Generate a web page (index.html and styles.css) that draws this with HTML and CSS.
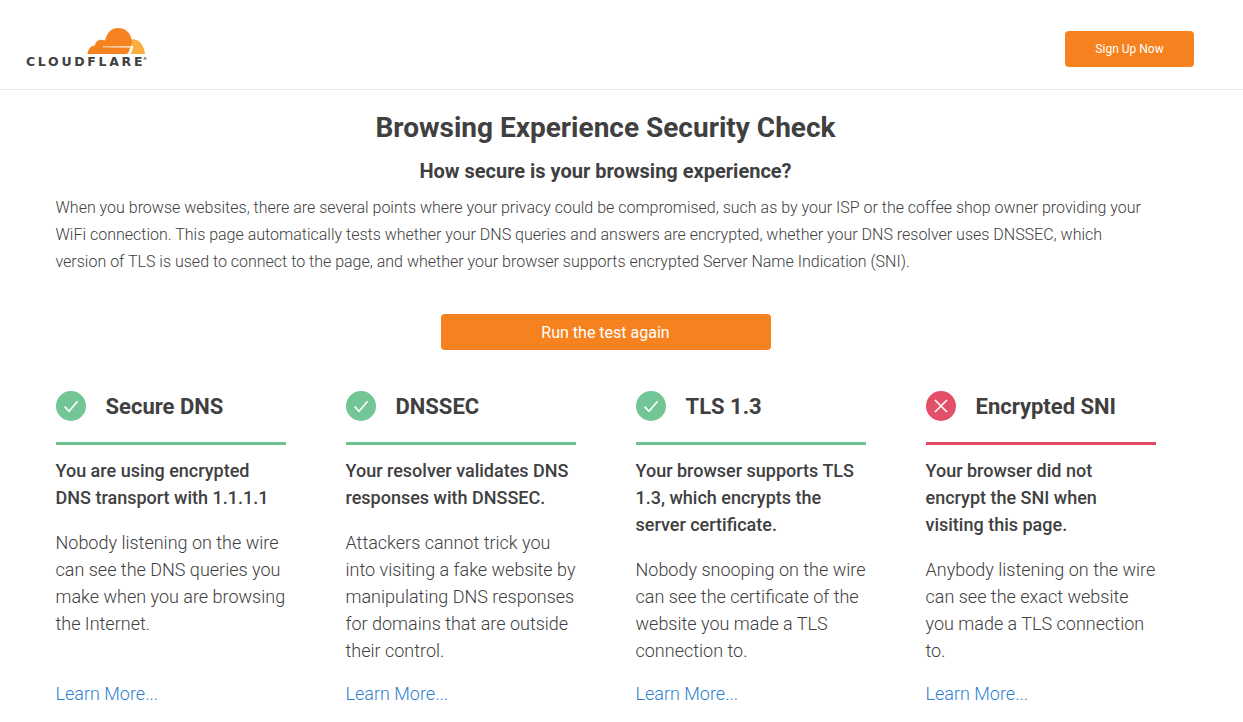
FILE: index.html
```html
<!DOCTYPE html>
<html lang="en">
<head>
<meta charset="utf-8">
<title>Browsing Experience Security Check</title>
<link rel="stylesheet" href="styles.css">
</head>
<body>
<header class="site-header">
  <a class="logo" href="#">
    <svg class="logo-cloud" width="60" height="28" viewBox="0 0 60 28" aria-hidden="true">
      <path fill="#fbad41" d="M44 12.5 C52 11 58 17 59 27 L44 27 C45 26.2 45.8 25 46.2 23.5 L47 21 C47.5 19.5 46.6 18.6 45 18.4 L44 12.5 Z"/>
      <path fill="#f6821f" d="M1.5 27 C2 22 4.5 19 9 18.5 C9.5 14 13.5 11.5 19 13.5 C21 5.5 25.5 1 32 1 C39 1 44.5 5.5 45.5 12.5 C46 15 45.8 16.5 45.2 18 L43 24.5 C42.5 26.2 41.5 27 39.5 27 Z"/>
      <path fill="#fff" d="M17 19.4 L44.8 19.2 L44.4 20.4 L17 20.2 Z"/>
    </svg>
    <span class="logo-text">CLOUDFLARE<sup class="logo-mark">®</sup></span>
  </a>
  <a class="signup" href="#">Sign Up Now</a>
</header>
<main class="page">
  <h1 class="title">Browsing Experience Security Check</h1>
  <h2 class="subtitle">How secure is your browsing experience?</h2>
  <p class="intro">When you browse websites, there are several points where your privacy could be compromised, such as by your ISP or the coffee shop owner providing your WiFi connection. This page automatically tests whether your DNS queries and answers are encrypted, whether your DNS resolver uses DNSSEC, which version of TLS is used to connect to the page, and whether your browser supports encrypted Server Name Indication (SNI).</p>
  <div class="action"><a class="run" href="#">Run the test again</a></div>
  <section class="results">
    <article class="card">
      <div class="card-head pass">
        <svg class="status" viewBox="0 0 30 30" aria-hidden="true"><circle class="disc" cx="15" cy="15" r="15"/><path class="mark" d="M8.6 15.6 L13 20.2 L21.6 10.2"/></svg>
        <h3 class="card-title">Secure DNS</h3>
      </div>
      <p class="lead">You are using encrypted DNS transport with 1.1.1.1</p>
      <p class="detail">Nobody listening on the wire can see the DNS queries you make when you are browsing the Internet.</p>
      <a class="more" href="#">Learn More...</a>
    </article>
    <article class="card">
      <div class="card-head pass">
        <svg class="status" viewBox="0 0 30 30" aria-hidden="true"><circle class="disc" cx="15" cy="15" r="15"/><path class="mark" d="M8.6 15.6 L13 20.2 L21.6 10.2"/></svg>
        <h3 class="card-title">DNSSEC</h3>
      </div>
      <p class="lead">Your resolver validates DNS responses with DNSSEC.</p>
      <p class="detail">Attackers cannot trick you into visiting a fake website by manipulating DNS responses for domains that are outside their control.</p>
      <a class="more" href="#">Learn More...</a>
    </article>
    <article class="card">
      <div class="card-head pass">
        <svg class="status" viewBox="0 0 30 30" aria-hidden="true"><circle class="disc" cx="15" cy="15" r="15"/><path class="mark" d="M8.6 15.6 L13 20.2 L21.6 10.2"/></svg>
        <h3 class="card-title">TLS 1.3</h3>
      </div>
      <p class="lead">Your browser supports TLS 1.3, which encrypts the server certificate.</p>
      <p class="detail">Nobody snooping on the wire can see the certificate of the website you made a TLS connection to.</p>
      <a class="more" href="#">Learn More...</a>
    </article>
    <article class="card">
      <div class="card-head fail">
        <svg class="status" viewBox="0 0 30 30" aria-hidden="true"><circle class="disc" cx="15" cy="15" r="15"/><path class="mark" d="M9 9 L21 21 M21 9 L9 21"/></svg>
        <h3 class="card-title">Encrypted SNI</h3>
      </div>
      <p class="lead">Your browser did not encrypt the SNI when visiting this page.</p>
      <p class="detail">Anybody listening on the wire can see the exact website you made a TLS connection to.</p>
      <a class="more" href="#">Learn More...</a>
    </article>
  </section>
</main>
</body>
</html>
```
FILE: styles.css
```css
* { box-sizing: border-box; }
html, body { margin: 0; padding: 0; }
body {
  font-family: Roboto, "Liberation Sans", sans-serif;
  color: #404041;
  background: #fff;
  overflow-x: hidden;
}
a { text-decoration: none; }
.site-header {
  height: 90px;
  border-bottom: 1px solid #e6e6e6;
  display: flex;
  align-items: flex-start;
  justify-content: space-between;
  padding: 0 49px 0 26px;
}
.logo {
  display: flex;
  flex-direction: column;
  align-items: flex-end;
  width: 120px;
  padding-top: 27px;
}
.logo-cloud { display: block; }
.logo-text {
  display: block;
  width: 120px;
  margin-top: 1px;
  font-family: "DejaVu Sans", "Liberation Sans", sans-serif;
  font-weight: 700;
  font-size: 12.5px;
  line-height: 12px;
  letter-spacing: 2.7px;
  color: #404041;
  white-space: nowrap;
  position: relative;
}
.logo-mark {
  position: absolute;
  top: 1px;
  right: -1px;
  font-size: 4px;
  line-height: 4px;
  letter-spacing: 0;
}
.signup {
  width: 129px;
  height: 36px;
  margin-top: 31px;
  border-radius: 4px;
  background: #f6821f;
  color: #fff;
  font-size: 12px;
  display: flex;
  align-items: center;
  justify-content: center;
}
.page {
  width: 1100px;
  margin-left: 55.5px;
}
.title {
  margin: 20px 0 0;
  font-size: 28px;
  line-height: 36px;
  font-weight: 700;
  text-align: center;
}
.subtitle {
  margin: 12px 0 0;
  font-size: 20px;
  line-height: 27px;
  font-weight: 700;
  text-align: center;
}
.intro {
  margin: 9px 0 0;
  font-size: 16px;
  line-height: 27px;
  font-weight: 300;
}
.action {
  display: flex;
  justify-content: center;
  margin-top: 39px;
}
.run {
  width: 330px;
  height: 36px;
  border-radius: 4px;
  background: #f6821f;
  color: #fff;
  font-size: 16px;
  display: flex;
  align-items: center;
  justify-content: center;
}
.results {
  display: grid;
  grid-template-columns: repeat(4, 230px);
  column-gap: 60px;
  margin-top: 40px;
}
.card {
  display: flex;
  flex-direction: column;
}
.card-head {
  display: flex;
  align-items: center;
  gap: 20px;
  padding-bottom: 20px;
  border-bottom: 3px solid;
}
.card-head.pass { border-color: #6fc28f; }
.card-head.fail { border-color: #e34b64; }
.status { width: 30px; height: 30px; flex: none; }
.pass .disc { fill: #72c594; }
.fail .disc { fill: #e34f68; }
.mark {
  fill: none;
  stroke: #fff;
  stroke-width: 1.6;
}
.card-title {
  margin: 2px 0 0;
  font-size: 22px;
  line-height: 30px;
  height: 30px;
  font-weight: 700;
}
.lead {
  margin: 12px 0 0;
  font-size: 18px;
  line-height: 27px;
  font-weight: 500;
}
.detail {
  margin: 18px 0 0;
  font-size: 18px;
  line-height: 27px;
  font-weight: 300;
}
.more {
  margin-top: auto;
  padding-top: 16px;
  font-size: 18px;
  line-height: 27px;
  font-weight: 300;
  color: #2f7fd0;
}
```
